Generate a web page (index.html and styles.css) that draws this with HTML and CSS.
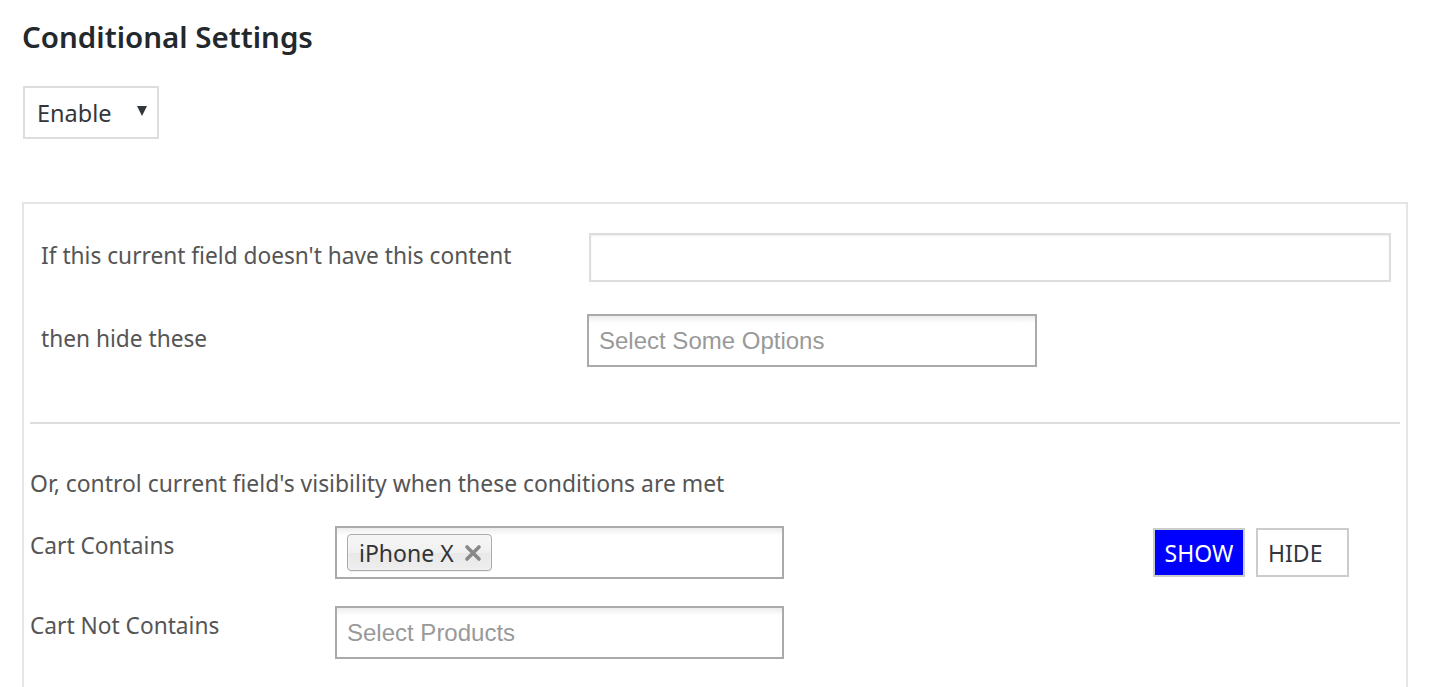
FILE: index.html
```html
<!DOCTYPE html>
<html>
<head>
<meta charset="utf-8">
<link rel="stylesheet" href="styles.css">
</head>
<body>
<div class="page">
  <h2 class="title">Conditional Settings</h2>
  <div class="enable-select">
    <span class="enable-text">Enable</span>
    <span class="enable-arrow"></span>
  </div>

  <div class="panel">
    <div class="section-top">
      <div class="row row-first">
        <div class="top-label">If this current field doesn't have this content</div>
        <div class="text-input"></div>
      </div>
      <div class="row row-second">
        <div class="top-label">then hide these</div>
        <div class="multi-select options-select"><span class="placeholder">Select Some Options</span></div>
      </div>
    </div>

    <div class="divider"></div>

    <div class="section-bottom">
      <div class="intro">Or, control current field's visibility when these conditions are met</div>
      <div class="cond-row">
        <div class="cond-label">Cart Contains</div>
        <div class="multi-select product-select">
          <span class="chip">iPhone X<span class="chip-x">
            <svg width="18" height="18" viewBox="0 0 18 18"><path d="M3 3 L15 15 M15 3 L3 15" stroke="#888888" stroke-width="3.6" stroke-linecap="round"/></svg>
          </span></span>
        </div>
        <div class="toggle">
          <button class="btn btn-show">SHOW</button>
          <button class="btn btn-hide">HIDE</button>
        </div>
      </div>
      <div class="cond-row">
        <div class="cond-label">Cart Not Contains</div>
        <div class="multi-select product-select"><span class="placeholder">Select Products</span></div>
      </div>
    </div>
  </div>
</div>
</body>
</html>
```

FILE: styles.css
```css
html, body {
  margin: 0;
  padding: 0;
  background: #ffffff;
}

body {
  font-family: "Noto Sans", "Open Sans", sans-serif;
  color: #555555;
}

.page {
  padding: 17px 0 0 22px;
}

.title {
  margin: 0;
  font-size: 29.5px;
  line-height: 40px;
  font-weight: 600;
  color: #23282d;
}

.enable-select {
  margin-top: 29px;
  margin-left: 1px;
  width: 136px;
  height: 53px;
  box-sizing: border-box;
  border: 2px solid #dddddd;
  display: flex;
  align-items: center;
  padding-left: 12px;
  position: relative;
}

.enable-text {
  font-size: 23.5px;
  color: #32373c;
}

.enable-arrow {
  position: absolute;
  right: 10px;
  top: 18px;
  width: 0;
  height: 0;
  border-left: 5px solid transparent;
  border-right: 5px solid transparent;
  border-top: 10px solid #32373c;
}

.panel {
  margin-top: 63px;
  width: 1386px;
  height: 520px;
  box-sizing: border-box;
  border: 2px solid #e5e5e5;
  padding: 0 6px;
}

.section-top {
  padding: 29px 0 0 11px;
}

.row {
  display: flex;
  align-items: center;
}

.top-label {
  width: 548px;
  font-size: 22.7px;
  line-height: 30px;
  padding-bottom: 4px;
}

.text-input {
  width: 802px;
  height: 49px;
  box-sizing: border-box;
  border: 2px solid #dddddd;
  box-shadow: inset 0 1px 2px rgba(0,0,0,0.07);
}

.row-second {
  margin-top: 32px;
}

.multi-select {
  box-sizing: border-box;
  border: 2px solid #aaaaaa;
  background: linear-gradient(#eeeeee 1%, #ffffff 15%);
  display: flex;
  align-items: center;
}

.options-select {
  margin-left: -2px;
  width: 450px;
  height: 53px;
  padding-left: 10px;
}

.placeholder {
  font-family: "Liberation Sans", Arial, sans-serif;
  font-size: 24px;
  color: #999999;
}

.divider {
  margin-top: 55px;
  height: 2px;
  background: #dddddd;
}

.section-bottom {
  padding-top: 45px;
}

.intro {
  font-size: 22.9px;
  line-height: 30px;
}

.cond-row {
  display: flex;
  align-items: flex-start;
  margin-top: 27px;
}

.cond-row + .cond-row {
  margin-top: 27px;
}

.cond-label {
  width: 305px;
  font-size: 22.7px;
  line-height: 30px;
  padding-top: 5px;
}

.product-select {
  width: 449px;
  height: 53px;
  padding-left: 10px;
}

.chip {
  display: inline-flex;
  align-items: center;
  height: 37px;
  box-sizing: border-box;
  padding: 0 9px 0 11px;
  border: 1px solid #aaaaaa;
  border-radius: 4px;
  background: linear-gradient(#f4f4f4 20%, #f0f0f0 50%, #e8e8e8 52%, #eeeeee 100%);
  box-shadow: 0 0 2px #ffffff inset, 0 1px 0 rgba(0,0,0,0.05);
  font-size: 23px;
  color: #333333;
}

.chip-x {
  display: inline-flex;
  margin-left: 10px;
}

.toggle {
  display: flex;
  gap: 11px;
  margin-left: 369px;
  margin-top: 2px;
}

.btn {
  height: 49px;
  box-sizing: border-box;
  border: 2px solid #cccccc;
  font-family: "Noto Sans", "Open Sans", sans-serif;
  font-size: 23px;
  padding: 0;
  margin: 0;
  border-radius: 0;
}

.btn-show {
  width: 92px;
  background: #0000ff;
  color: #ffffff;
}

.btn-hide {
  width: 93px;
  background: #ffffff;
  color: #32373c;
  text-align: left;
  padding-left: 10px;
}
```
